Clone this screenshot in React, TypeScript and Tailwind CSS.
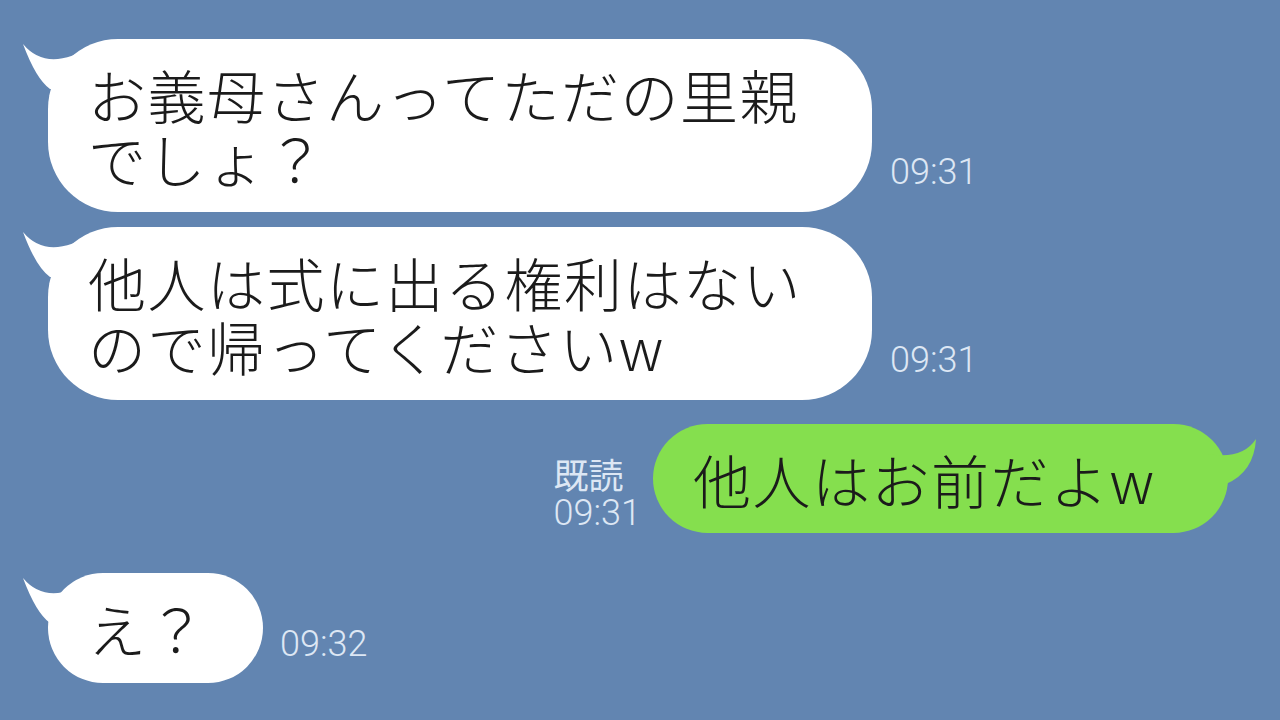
import type { ReactNode } from 'react';

const jp = 'font-["Noto_Sans_CJK_JP","Noto_Sans",sans-serif]';

function LeftTail() {
  return (
    <svg className="absolute left-[-30px] top-0" width="80" height="55" viewBox="-30 0 80 55">
      <path d="M -25 5 Q -12 40 2 50 L 30 50 L 45 6 Q 0 35 -25 5 Z" fill="#ffffff" />
    </svg>
  );
}

function RightTail() {
  return (
    <svg className="absolute right-[-30px] top-0" width="50" height="65" viewBox="-20 0 50 65">
      <path d="M 28 15 Q 26 48 -2 60 L -20 60 L -20 30 Q 14 36 28 15 Z" fill="#85df4e" />
    </svg>
  );
}

function Bubble({ lines, width, height, green }: { lines: string[]; width: string; height: string; green?: boolean }) {
  return (
    <div
      className={`relative flex flex-col justify-center ${width} ${height} pl-[40px] rounded-[70px] ${
        green ? 'bg-[#85df4e]' : 'bg-white'
      }`}
    >
      {green ? <RightTail /> : <LeftTail />}
      {lines.map((l) => (
        <div key={l} className={`relative h-[64px] ${jp} font-light text-[58px] leading-[64px] tracking-[1.5px] text-[#1b1b1b]`}>
          {l}
        </div>
      ))}
    </div>
  );
}

function Time({ children }: { children: ReactNode }) {
  return <div className='font-["Roboto",sans-serif] font-light text-[36px] leading-[36px] text-[#dde7f4]'>{children}</div>;
}

export default function App() {
  return (
    <div className="w-[1280px] h-[720px] overflow-hidden bg-[#6285b1] flex flex-col pt-[39px]">
      {/* incoming */}
      <div className="flex items-end pl-[48px]">
        <Bubble width="w-[824px]" height="h-[173px]" lines={['お義母さんってただの里親', 'でしょ？']} />
        <div className="ml-[18px] mb-[22px]">
          <Time>09:31</Time>
        </div>
      </div>

      <div className="flex items-end pl-[48px] mt-[15px]">
        <Bubble width="w-[824px]" height="h-[173px]" lines={['他人は式に出る権利はない', 'ので帰ってくださいw']} />
        <div className="ml-[18px] mb-[22px]">
          <Time>09:31</Time>
        </div>
      </div>

      {/* outgoing */}
      <div className="flex items-end justify-end pr-[52px] mt-[24px]">
        <div className="flex flex-col items-start mr-[12px] mb-[2px]">
          <div className={`${jp} text-[35px] leading-[42px] text-[#dde7f4]`}>既読</div>
          <Time>09:31</Time>
        </div>
        <Bubble width="w-[575px]" height="h-[109px]" lines={['他人はお前だよw']} green />
      </div>

      <div className="flex items-end pl-[48px] mt-[40px]">
        <Bubble width="w-[215px]" height="h-[110px]" lines={['え？']} />
        <div className="ml-[17px] mb-[21px]">
          <Time>09:32</Time>
        </div>
      </div>
    </div>
  );
}
